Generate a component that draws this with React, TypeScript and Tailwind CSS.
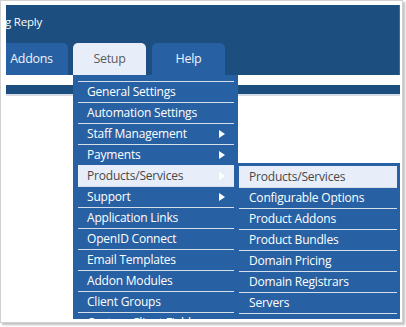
const setupItems = [
  { label: 'General Settings' },
  { label: 'Automation Settings' },
  { label: 'Staff Management', sub: true },
  { label: 'Payments', sub: true },
  { label: 'Products/Services', sub: true, active: true },
  { label: 'Support', sub: true },
  { label: 'Application Links' },
  { label: 'OpenID Connect' },
  { label: 'Email Templates' },
  { label: 'Addon Modules' },
  { label: 'Client Groups' },
  { label: 'Custom Client Fields' },
];

const productItems = [
  'Products/Services',
  'Configurable Options',
  'Product Addons',
  'Product Bundles',
  'Domain Pricing',
  'Domain Registrars',
  'Servers',
];

function Arrow() {
  return (
    <svg width="6" height="8" viewBox="0 0 6 8" className="shrink-0">
      <path d="M0 0 L6 4 L0 8 Z" fill="#ffffff" />
    </svg>
  );
}

export default function App() {
  return (
    <div className="w-[406px] h-[327px] bg-white font-['Open_Sans',sans-serif]">
      <div className="w-[403px] h-[323px] border border-[#d2d2d2] bg-white pl-[5px] pt-[4px] shadow-[2px_2px_2px_rgba(0,0,0,0.25)]">
        <div className="relative w-[394px] h-[314px] overflow-hidden bg-white">
          {/* header */}
          <div className="h-[70px] bg-[#1c4e7f] border-r border-[#3d6a96] overflow-hidden">
            <div className="h-[20px] mt-[7px] leading-[20px] text-[11.5px] tracking-[-0.2px] text-white -ml-[1px]">g Reply</div>
            <div className="flex items-end h-[32px] mt-[11px]">
              <div className="w-[73px] h-[32px] -ml-[11px] shrink-0 rounded-t-[5px] bg-[#2861a3] text-[#eef3fa] text-[12.5px] tracking-[-0.3px] flex items-center justify-center">
                Addons
              </div>
              <div className="w-[73px] h-[32px] ml-[5px] shrink-0 rounded-t-[5px] bg-[#e7eef9] text-[#5b5b5b] text-[12.5px] tracking-[-0.3px] flex items-center justify-center">
                Setup
              </div>
              <div className="w-[73px] h-[32px] ml-[6px] shrink-0 rounded-t-[5px] bg-[#2861a3] text-[#eef3fa] text-[12.5px] tracking-[-0.3px] flex items-center justify-center">
                Help
              </div>
            </div>
          </div>
          <div className="h-[10px] bg-white" />
          <div className="h-[9px] bg-[#1c4e7f]" />
          <div className="h-[2px] bg-[#d6dce2]" />

          {/* Setup dropdown */}
          <div className="absolute left-[67px] top-[70px] w-[165px] bg-[#2861a3] pt-[6px] pl-[5px] pr-[4px] pb-[6px]">
            {setupItems.map((item) => (
              <div
                key={item.label}
                className={
                  item.active
                    ? 'h-[21px] border-t border-[#e7eef9] bg-[#e7eef9] text-[#474747] flex items-center pl-[9px] pr-[9px] text-[12px] tracking-[-0.2px] font-medium'
                    : 'h-[21px] border-t border-[#d5dfea] text-white flex items-center pl-[9px] pr-[9px] text-[12px] tracking-[-0.2px] font-medium'
                }
              >
                <span className="flex-1 whitespace-nowrap">{item.label}</span>
                {item.sub && <Arrow />}
              </div>
            ))}
          </div>

          {/* Products/Services submenu */}
          <div className="absolute left-[230px] top-[158px] w-[166px] bg-[#2861a3] pt-[3px] pl-[3px] pr-[5px] pb-[5px]">
            {productItems.map((label, i) => (
              <div
                key={label}
                className={
                  i === 0
                    ? 'h-[21px] border-t border-[#e7eef9] bg-[#e7eef9] text-[#474747] flex items-center pl-[10px] text-[12px] tracking-[-0.2px] font-medium whitespace-nowrap'
                    : 'h-[21px] border-t border-[#d5dfea] text-white flex items-center pl-[10px] text-[12px] tracking-[-0.2px] font-medium whitespace-nowrap'
                }
              >
                {label}
              </div>
            ))}
            <div className="h-px bg-[#d5dfea]" />
          </div>
        </div>
      </div>
    </div>
  );
}
